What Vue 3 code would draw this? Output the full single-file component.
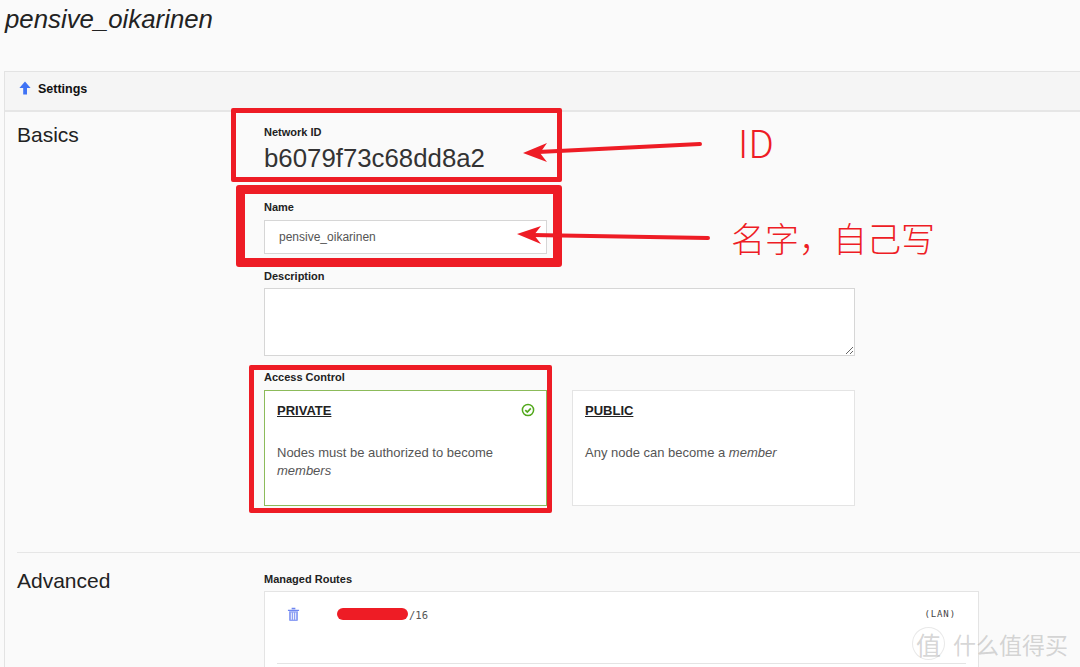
<script setup>
const routeMask = { width: '71px' }
</script>

<template>
  <div class="page">
    <h1 class="title">pensive_oikarinen</h1>

    <section class="panel">
      <header class="panel-head">
        <svg class="up-icon" viewBox="0 0 12 14" aria-hidden="true">
          <path d="M6 .5 11.6 7H8v6.5H4.200V7H.4z" fill="#3f73f5" />
        </svg>
        <span>Settings</span>
      </header>

      <div class="row basics">
        <h2 class="row-title">Basics</h2>
        <div class="fields">
          <label class="label id-label">Network ID</label>
          <div class="network-id">b6079f73c68dd8a2</div>

          <label class="label name-label">Name</label>
          <input class="name-input" type="text" value="pensive_oikarinen" />

          <label class="label desc-label">Description</label>
          <textarea class="desc-input"></textarea>

          <label class="label access-label">Access Control</label>
          <div class="access">
            <div class="access-card selected">
              <div class="card-title">
                <u>PRIVATE</u>
                <svg class="check" viewBox="0 0 14 14" aria-hidden="true">
                  <circle cx="7" cy="7" r="5.600" fill="none" stroke="#52a81c" stroke-width="1.500" />
                  <path d="M4.300 7.100 6.300 9 9.800 5.300" fill="none" stroke="#52a81c" stroke-width="1.700" />
                </svg>
              </div>
              <p>Nodes must be authorized to become <em>members</em></p>
            </div>
            <div class="access-card">
              <div class="card-title"><u>PUBLIC</u></div>
              <p>Any node can become a <em>member</em></p>
            </div>
          </div>
        </div>
      </div>

      <div class="row advanced">
        <h2 class="row-title">Advanced</h2>
        <div class="fields">
          <label class="label">Managed Routes</label>
          <div class="routes">
            <div class="route">
              <svg class="trash" viewBox="0 0 14 16" aria-hidden="true">
                <path d="M5 1.500h4M1 3.500h12" fill="none" stroke="#6f86f0" stroke-width="1.500" />
                <path d="M2.200 4.500h9.600v9.300q0 1.200-1.200 1.200H3.400q-1.200 0-1.200-1.200z" fill="#8ea0f4" />
                <path d="M4.700 6v7.500M7 6v7.500M9.300 6v7.500" stroke="#fff" stroke-width=".9" />
              </svg>
              <span class="mask" :style="routeMask"></span>
              <span class="mono slash">/16</span>
              <span class="mono lan">(LAN)</span>
            </div>
          </div>
        </div>
      </div>
    </section>

    <!-- hand-drawn marks that sit over the screenshot -->
    <div class="mark box-id"></div>
    <div class="mark box-name"></div>
    <div class="mark box-access"></div>
    <svg class="arrows" viewBox="0 0 1080 667" aria-hidden="true">
      <path d="M700 144 538 152" stroke="#ee1c25" stroke-width="4" stroke-linecap="round" fill="none" />
      <path d="M523 153 547 143 540 153 547 162z" fill="#ee1c25" />
      <path d="M708 238 532 235" stroke="#ee1c25" stroke-width="4" stroke-linecap="round" fill="none" />
      <path d="M517 234 541 226 534 235 541 244z" fill="#ee1c25" />
    </svg>
    <span class="note note-id">ID</span>
    <span class="note note-name">名字，自己写</span>

    <div class="watermark">
      <span class="wm-badge">值</span>
      <span>什么值得买</span>
    </div>
  </div>
</template>

<style>
html,
body {
  margin: 0;
  background: #fafafa;
}
</style>

<style scoped>
* {
  box-sizing: border-box;
}

.page {
  position: relative;
  width: 1080px;
  height: 667px;
  overflow: hidden;
  background: #fafafa;
  color: #222;
  font-family: 'Liberation Sans', Arial, sans-serif;
  font-size: 13px;
}

.title {
  height: 71px;
  margin: 0;
  padding: 5px 0 0 5px;
  font-size: 25.800px;
  font-weight: 400;
  font-style: italic;
  line-height: 28px;
  color: #222;
}

.panel {
  width: 1140px;
  margin-left: 4px;
  border: 1px solid #e3e3e3;
  border-bottom: 0;
}

.panel-head {
  display: flex;
  align-items: center;
  gap: 7px;
  height: 40px;
  padding: 0 0 4px 14px;
  background: #f5f5f5;
  border-bottom: 2px solid #e6e6e6;
  font-size: 12.500px;
  font-weight: 700;
  color: #111;
}

.up-icon {
  width: 12px;
  height: 14px;
  margin-top: -3px;
}

.row {
  display: grid;
  grid-template-columns: 247px 1fr;
  margin-left: 12px;
}

.basics {
  height: 441px;
  padding-top: 13px;
  border-bottom: 1px solid #e6e6e6;
}

.advanced {
  padding-top: 20px;
}

.row-title {
  margin: -2px 0 0;
  font-size: 21px;
  font-weight: 400;
  line-height: 23px;
  color: #222;
}

.advanced .row-title {
  margin-top: -4px;
}

.fields {
  display: flex;
  flex-direction: column;
  align-items: flex-start;
}

.label {
  display: block;
  font-size: 11px;
  font-weight: 700;
  line-height: 13px;
  color: #222;
}

.id-label {
  margin-top: 1px;
}

.network-id {
  margin-top: 4px;
  font-size: 25.800px;
  line-height: 30px;
  color: #333;
}

.name-label {
  margin-top: 28px;
}

.name-input {
  width: 283px;
  height: 34px;
  margin-top: 6px;
  padding: 0 14px;
  border: 1px solid #d6d6d6;
  background: #fff;
  font: 12px 'Liberation Sans', Arial, sans-serif;
  color: #555;
  outline: 0;
}

.desc-label {
  margin-top: 16px;
}

.desc-input {
  display: block;
  width: 591px;
  height: 68px;
  margin-top: 5px;
  border: 1px solid #d6d6d6;
  background: #fff;
  outline: 0;
}

.access-label {
  margin-top: 15px;
}

.access {
  display: flex;
  gap: 25px;
  margin-top: 6px;
}

.access-card {
  width: 283px;
  height: 116px;
  padding: 12px 12px;
  border: 1px solid #e4e4e4;
  background: #fff;
  color: #555;
}

.access-card.selected {
  border-color: #8cbb5a;
}

.card-title {
  display: flex;
  justify-content: space-between;
  align-items: center;
  height: 14px;
  font-weight: 700;
  color: #222;
}

.check {
  width: 14px;
  height: 14px;
  margin-right: -1px;
}

.access-card p {
  margin: 27px 0 0;
  line-height: 18px;
}

.routes {
  width: 715px;
  height: 100px;
  margin-top: 5px;
  padding: 0 12px;
  border: 1px solid #e4e4e4;
  background: #fff;
}

.route {
  display: flex;
  align-items: center;
  height: 72px;
  padding: 0 10px 28px 10px;
  border-bottom: 1px solid #e4e4e4;
}

.trash {
  width: 13px;
  height: 15px;
  margin-top: 2px;
}

.mask {
  height: 12px;
  margin-left: 37px;
  border-radius: 6px;
  background: #ee1c25;
}

.mono {
  margin-top: 2px;
  font-family: 'DejaVu Sans Mono', monospace;
  font-size: 10.500px;
  color: #555;
}

.slash {
  margin-left: 1px;
}

.lan {
  margin-left: auto;
  margin-top: 1px;
  font-size: 9px;
  letter-spacing: .9px;
  color: #444;
}

.mark {
  position: absolute;
  border: 5px solid #ee1c25;
  border-radius: 2px;
}

.box-id {
  left: 231px;
  top: 108px;
  width: 331px;
  height: 74px;
}

.box-name {
  left: 236px;
  top: 185px;
  width: 326px;
  height: 82px;
  border-width: 9px;
  border-radius: 3px;
}

.box-access {
  left: 249px;
  top: 365px;
  width: 303px;
  height: 148px;
}

.arrows {
  position: absolute;
  inset: 0;
  width: 1080px;
  height: 667px;
}

.note {
  position: absolute;
  color: #ee1c25;
  font-family: 'Noto Sans CJK SC', sans-serif;
  font-weight: 300;
  white-space: nowrap;
}

.note-id {
  left: 738px;
  top: 114px;
  font-size: 38px;
  line-height: 56px;
}

.note-name {
  left: 731px;
  top: 213px;
  font-size: 34px;
  line-height: 50px;
}

.watermark {
  position: absolute;
  left: 912px;
  top: 627px;
  display: flex;
  align-items: center;
  gap: 8px;
  font-family: 'Noto Sans CJK SC', sans-serif;
  font-size: 23px;
  line-height: 28px;
  color: rgba(150, 150, 150, .4);
  white-space: nowrap;
}

.wm-badge {
  display: grid;
  place-items: center;
  width: 33px;
  height: 33px;
  border: 1px solid rgba(190, 190, 190, .35);
  border-radius: 50%;
  background: rgba(255, 255, 255, .6);
  font-size: 25px;
}
</style>
